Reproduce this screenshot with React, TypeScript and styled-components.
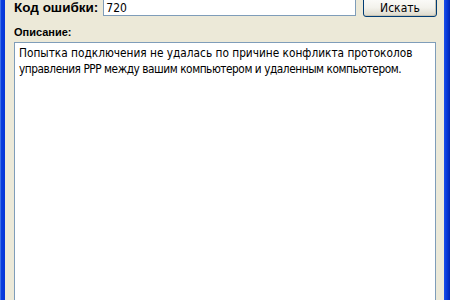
import styled, { createGlobalStyle } from 'styled-components'

const GlobalStyle = createGlobalStyle`
  html, body {
    margin: 0;
    padding: 0;
    overflow: hidden;
    background: #ece9d8;
  }
`

const Window = styled.div`
  display: flex;
  width: 450px;
  height: 300px;
  background: #ece9d8;
  font-family: 'DejaVu Sans Condensed', 'DejaVu Sans', sans-serif;
  color: #000;
`

const FrameEdge = styled.div<{ $side: 'left' | 'right' }>`
  width: ${(p) => (p.$side === 'left' ? '5px' : '6px')};
  flex-shrink: 0;
  background: ${(p) =>
    p.$side === 'left'
      ? 'linear-gradient(to right, #3d6ee8 0, #3d6ee8 1px, #0a3ee0 1px, #0535d6 5px)'
      : 'linear-gradient(to right, #1c4fe8 0, #0638d8 3px, #0024b0 6px)'};
`

const Body = styled.div`
  flex: 1;
  display: flex;
  flex-direction: column;
  padding: 0 7px 0 9px;
  min-width: 0;
`

const SearchRow = styled.div`
  display: flex;
  align-items: flex-end;
  margin-top: -5px;
  height: 22px;
`

const Label = styled.span`
  font-family: 'Liberation Sans', sans-serif;
  font-weight: bold;
  font-size: 13.5px;
  white-space: nowrap;
  margin-right: 5px;
  padding-bottom: 2px;
`

const CodeInput = styled.div`
  flex: 1;
  height: 21px;
  border: 1px solid #7f9db9;
  background: #fff;
  font-size: 12px;
  line-height: 24px;
  padding-left: 2px;
  margin-bottom: 1px;
  box-sizing: border-box;
`

const SearchButton = styled.button`
  width: 74px;
  height: 23px;
  margin-left: 7px;
  border: 1px solid #003c74;
  border-radius: 3px;
  background: linear-gradient(to bottom, #ffffff 0%, #f3f2ec 60%, #dcd9cb 100%);
  box-shadow: inset -1px -1px 0 #c8c4b4;
  font-family: inherit;
  font-size: 12px;
  color: #000;
  padding: 5px 0 0;
  flex-shrink: 0;
`

const SectionLabel = styled.div`
  font-family: 'Liberation Sans', sans-serif;
  font-weight: bold;
  font-size: 11px;
  margin-top: 8px;
  height: 17px;
  line-height: 15px;
`

const Description = styled.div`
  flex: 1;
  border: 1px solid #7f9db9;
  background: #fff;
  padding: 2px 4px;
  margin-bottom: -4px;
  margin-right: 1px;
  overflow: hidden;
`

const DescLine = styled.div<{ $tracking?: number }>`
  font-size: 11.75px;
  line-height: 16px;
  white-space: nowrap;
  letter-spacing: ${(p) => p.$tracking ?? 0}px;
`

export default function App() {
  return (
    <>
      <GlobalStyle />
      <Window>
        <FrameEdge $side="left" />
        <Body>
          <SearchRow>
            <Label>Код ошибки:</Label>
            <CodeInput>720</CodeInput>
            <SearchButton>Искать</SearchButton>
          </SearchRow>
          <SectionLabel>Описание:</SectionLabel>
          <Description>
            <DescLine>Попытка подключения не удалась по причине конфликта протоколов</DescLine>
            <DescLine $tracking={-0.45}>управления PPP между вашим компьютером и удаленным компьютером.</DescLine>
          </Description>
        </Body>
        <FrameEdge $side="right" />
      </Window>
    </>
  )
}
